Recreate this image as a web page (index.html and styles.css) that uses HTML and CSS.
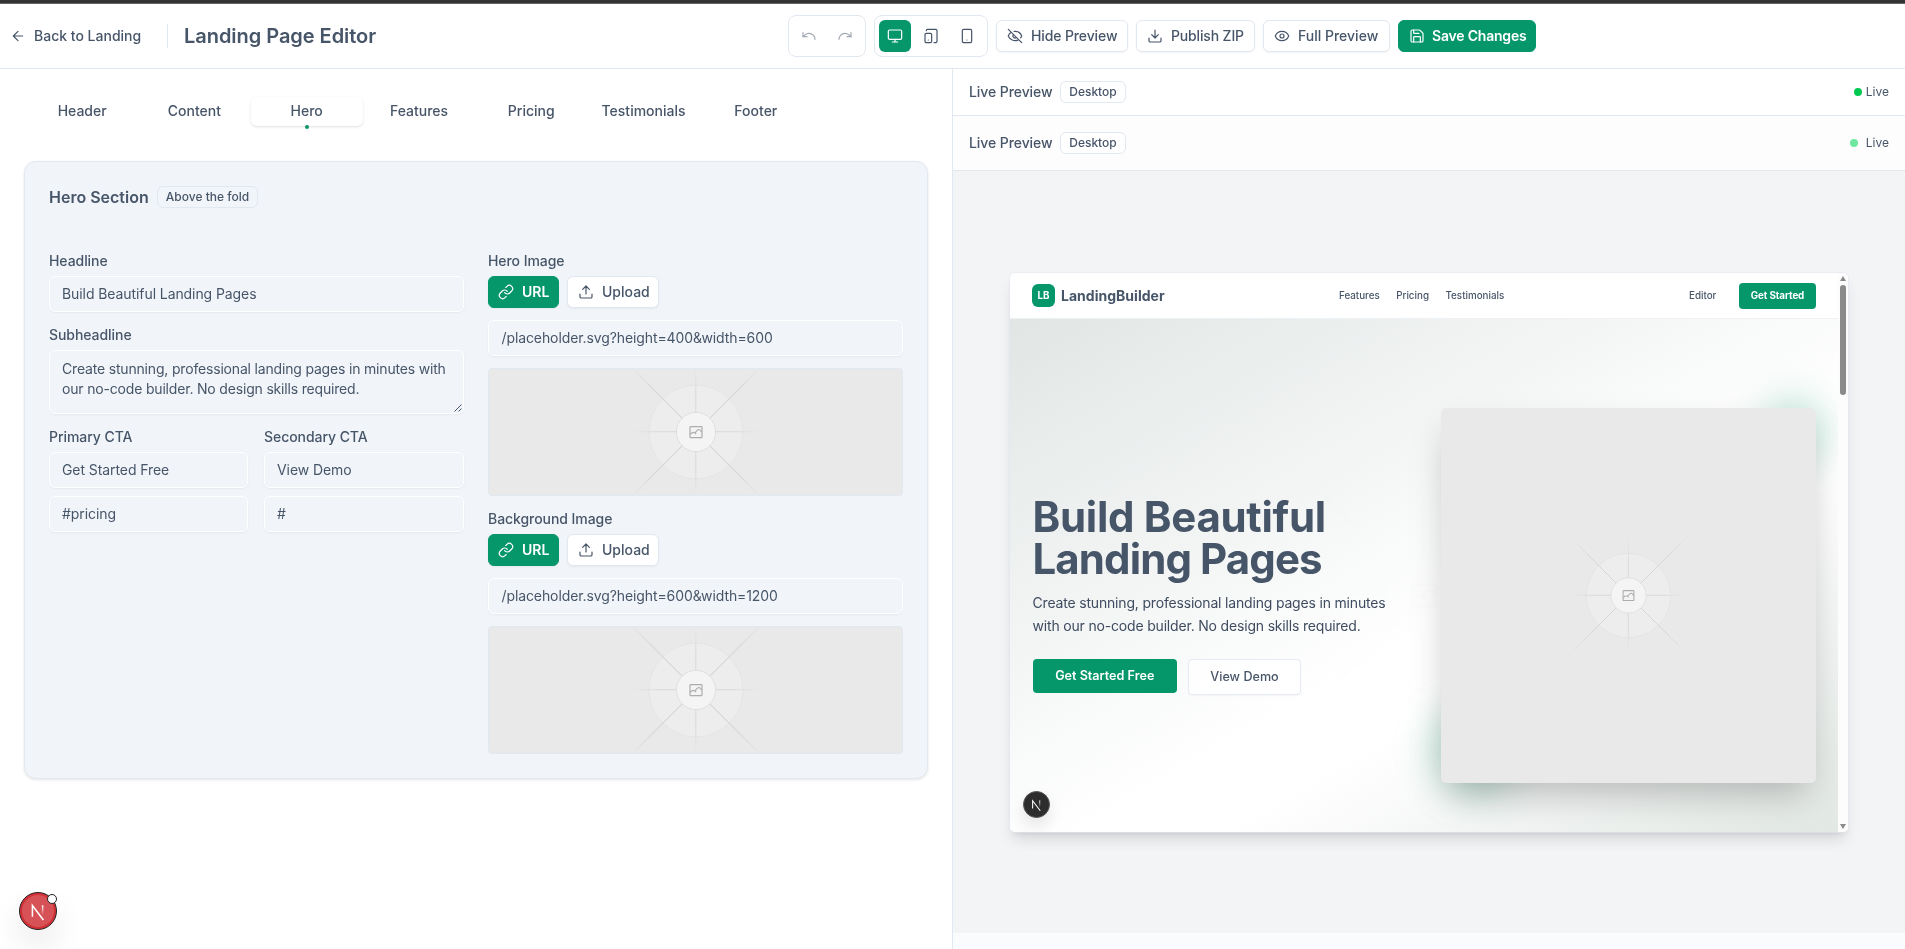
FILE: index.html
```html
<!DOCTYPE html>
<html lang="en">
<head>
<meta charset="utf-8">
<title>Landing Page Editor</title>
<link rel="stylesheet" href="styles.css">
</head>
<body>
<svg class="defs" width="0" height="0">
  <defs>
    <linearGradient id="fade-h" gradientUnits="userSpaceOnUse" x1="-64" y1="0" x2="64" y2="0"><stop offset="0" stop-color="#d8d8d8" stop-opacity="0"/><stop offset=".2" stop-color="#d8d8d8"/><stop offset=".8" stop-color="#d8d8d8"/><stop offset="1" stop-color="#d8d8d8" stop-opacity="0"/></linearGradient>
    <linearGradient id="fade-v" gradientUnits="userSpaceOnUse" x1="0" y1="-64" x2="0" y2="64"><stop offset="0" stop-color="#d8d8d8" stop-opacity="0"/><stop offset=".2" stop-color="#d8d8d8"/><stop offset=".8" stop-color="#d8d8d8"/><stop offset="1" stop-color="#d8d8d8" stop-opacity="0"/></linearGradient>
    <linearGradient id="fade-d" gradientUnits="userSpaceOnUse" x1="-66" y1="-66" x2="66" y2="66"><stop offset="0" stop-color="#d6d6d6" stop-opacity="0"/><stop offset=".17" stop-color="#d6d6d6"/><stop offset=".83" stop-color="#d6d6d6"/><stop offset="1" stop-color="#d6d6d6" stop-opacity="0"/></linearGradient>
    <linearGradient id="fade-u" gradientUnits="userSpaceOnUse" x1="-66" y1="66" x2="66" y2="-66"><stop offset="0" stop-color="#d6d6d6" stop-opacity="0"/><stop offset=".17" stop-color="#d6d6d6"/><stop offset=".83" stop-color="#d6d6d6"/><stop offset="1" stop-color="#d6d6d6" stop-opacity="0"/></linearGradient>
    <linearGradient id="n-fade" x1="0" y1="0" x2="0" y2="1"><stop offset="0" stop-color="#fff"/><stop offset="1" stop-color="#fff" stop-opacity="0"/></linearGradient>
    <symbol id="placeholder" viewBox="-64 -64 128 128">
      <circle r="47" fill="#ededed" stroke="#e3e3e3" stroke-width=".9"/>
      <path d="M-64 -.7H64V.3H-64Z" fill="url(#fade-h)"/>
      <path d="M-.7-64H.3V64H-.7Z" fill="url(#fade-v)"/>
      <path d="M-64-64 64 64" stroke="url(#fade-d)" stroke-width="1.1"/>
      <path d="M-64 64 64-64" stroke="url(#fade-u)" stroke-width="1.1"/>
      <circle r="19.6" fill="#f4f4f4" stroke="#dedede" stroke-width=".9"/>
      <g fill="none" stroke="#adadad" stroke-width="1.2" stroke-linejoin="round">
        <rect x="-6" y="-5.4" width="12" height="11" rx=".7"/>
        <path d="M-6 2.6-4.2.9Q-2.8-.1-1.4.7L.2 1.9M-1.2.8C.7-.2.6-2.4 3-2.5 4.6-2.3 5-.6 6 .1"/>
      </g>
    </symbol>
    <symbol id="n-mark" viewBox="0 0 40 40">
      <path d="M13.8 26.5V14L26 30" fill="none" stroke="#fff" stroke-width="1.7"/>
      <path d="M24.3 13.6H26v11h-1.7z" fill="url(#n-fade)"/>
    </symbol>
    <symbol id="link" viewBox="0 0 24 24"><path d="M10 13a5 5 0 0 0 7.54.54l3-3a5 5 0 0 0-7.07-7.07l-1.72 1.71"/><path d="M14 11a5 5 0 0 0-7.54-.54l-3 3a5 5 0 0 0 7.07 7.07l1.71-1.71"/></symbol>
    <symbol id="upload" viewBox="0 0 24 24"><path d="M12 3v12M17 8l-5-5-5 5M21 15v4a2 2 0 0 1-2 2H5a2 2 0 0 1-2-2v-4"/></symbol>
  </defs>
</svg>

<div class="topstrip"></div>
<header class="header">
  <a class="back"><svg class="icon" viewBox="0 0 24 24"><path d="m12 19-7-7 7-7M19 12H5"/></svg><span>Back to Landing</span></a>
  <i class="divider"></i>
  <h1 class="title">Landing Page Editor</h1>
  <div class="toolbar">
    <div class="group history">
      <button class="tool"><svg class="icon" viewBox="0 0 24 24"><path d="M3 7v6h6"/><path d="M21 17a9 9 0 0 0-9-9 9 9 0 0 0-6 2.3L3 13"/></svg></button>
      <button class="tool"><svg class="icon" viewBox="0 0 24 24"><path d="M21 7v6h-6"/><path d="M3 17a9 9 0 0 1 9-9 9 9 0 0 1 6 2.3l3 2.7"/></svg></button>
    </div>
    <div class="group">
      <button class="tool active"><svg class="icon" viewBox="0 0 24 24"><rect width="20" height="14" x="2" y="3" rx="2"/><path d="M8 21h8M12 17v4"/></svg></button>
      <button class="tool"><svg class="icon" viewBox="0 0 24 24"><rect width="10" height="14" x="3" y="8" rx="2"/><path d="M5 4a2 2 0 0 1 2-2h12a2 2 0 0 1 2 2v16a2 2 0 0 1-2 2h-2.4M8 18h.01"/></svg></button>
      <button class="tool"><svg class="icon" viewBox="0 0 24 24"><rect width="14" height="20" x="5" y="2" rx="2"/><path d="M12 18h.01"/></svg></button>
    </div>
    <button class="btn hide"><svg class="icon" viewBox="0 0 24 24"><path d="M10.733 5.076a10.744 10.744 0 0 1 11.205 6.575 1 1 0 0 1 0 .696 10.747 10.747 0 0 1-1.444 2.49M14.084 14.158a3 3 0 0 1-4.242-4.242M17.479 17.499a10.75 10.75 0 0 1-15.417-5.151 1 1 0 0 1 0-.696 10.75 10.75 0 0 1 4.446-5.143M2 2l20 20"/></svg><span>Hide Preview</span></button>
    <button class="btn publish"><svg class="icon" viewBox="0 0 24 24"><path d="M21 15v4a2 2 0 0 1-2 2H5a2 2 0 0 1-2-2v-4M7 10l5 5 5-5M12 15V3"/></svg><span>Publish ZIP</span></button>
    <button class="btn full"><svg class="icon" viewBox="0 0 24 24"><path d="M2.062 12.348a1 1 0 0 1 0-.696 10.75 10.75 0 0 1 19.876 0 1 1 0 0 1 0 .696 10.75 10.75 0 0 1-19.876 0"/><circle cx="12" cy="12" r="3"/></svg><span>Full Preview</span></button>
    <button class="btn primary save"><svg class="icon" viewBox="0 0 24 24"><path d="M15.2 3a2 2 0 0 1 1.4.6l3.8 3.8a2 2 0 0 1 .6 1.4V19a2 2 0 0 1-2 2H5a2 2 0 0 1-2-2V5a2 2 0 0 1 2-2z"/><path d="M17 21v-7a1 1 0 0 0-1-1H8a1 1 0 0 0-1 1v7M7 3v4a1 1 0 0 0 1 1h7"/></svg><span>Save Changes</span></button>
  </div>
</header>

<main class="workspace">
  <section class="editor">
    <nav class="tabs">
      <a class="tab">Header</a><a class="tab">Content</a><a class="tab current">Hero</a><a class="tab">Features</a><a class="tab">Pricing</a><a class="tab">Testimonials</a><a class="tab">Footer</a>
    </nav>
    <div class="card">
      <div class="card-head"><h2 class="card-title">Hero Section</h2><span class="badge fold">Above the fold</span></div>
      <div class="form">
        <div class="col">
          <div class="field"><label class="label">Headline</label><div class="input">Build Beautiful Landing Pages</div></div>
          <div class="field"><label class="label">Subheadline</label><div class="input area">Create stunning, professional landing pages in minutes with<br>our no-code builder. No design skills required.<svg class="grip" viewBox="0 0 8 8"><path d="M.5 7.5l7-7M4.5 7.5l3-3"/></svg></div></div>
          <div class="pair">
            <div class="field"><label class="label">Primary CTA</label><div class="input">Get Started Free</div><div class="input">#pricing</div></div>
            <div class="field"><label class="label">Secondary CTA</label><div class="input">View Demo</div><div class="input">#</div></div>
          </div>
        </div>
        <div class="col">
          <div class="field media"><label class="label">Hero Image</label>
            <div class="row"><button class="btn primary url"><svg class="icon"><use href="#link"/></svg><span>URL</span></button><button class="btn up"><svg class="icon"><use href="#upload"/></svg><span>Upload</span></button></div>
            <div class="input path">/placeholder.svg?height=400&amp;width=600</div>
            <div class="thumb"><svg class="ph"><use href="#placeholder"/></svg></div>
          </div>
          <div class="field media"><label class="label">Background Image</label>
            <div class="row"><button class="btn primary url"><svg class="icon"><use href="#link"/></svg><span>URL</span></button><button class="btn up"><svg class="icon"><use href="#upload"/></svg><span>Upload</span></button></div>
            <div class="input path">/placeholder.svg?height=600&amp;width=1200</div>
            <div class="thumb"><svg class="ph"><use href="#placeholder"/></svg></div>
          </div>
        </div>
      </div>
    </div>
  </section>

  <section class="preview">
    <div class="bar"><span class="bar-title">Live Preview</span><span class="badge desk">Desktop</span><span class="live"><i class="dot"></i>Live</span></div>
    <div class="bar second"><span class="bar-title">Live Preview</span><span class="badge desk">Desktop</span><span class="live"><i class="dot"></i>Live</span></div>
    <div class="stage">
      <div class="frame">
        <div class="site">
          <div class="site-nav">
            <span class="logo">LB</span><b class="brand">LandingBuilder</b>
            <div class="links"><span>Features</span><span>Pricing</span><span>Testimonials</span></div>
            <span class="edit">Editor</span><span class="start">Get Started</span>
          </div>
          <div class="hero">
            <svg class="hero-bg"><use href="#placeholder"/></svg>
            <div class="copy">
              <h3 class="headline"><span class="line-one">Build Beautiful</span><span class="line-two">Landing Pages</span></h3>
              <p class="lead">Create stunning, professional landing pages in minutes<br>with our no-code builder. No design skills required.</p>
              <div class="ctas"><span class="cta solid">Get Started Free</span><span class="cta ghost">View Demo</span></div>
            </div>
            <div class="shot"><i class="glow tr"></i><i class="glow bl"></i><div class="shot-img"><svg class="ph"><use href="#placeholder"/></svg></div></div>
            <div class="dev small"><svg class="n"><use href="#n-mark"/></svg></div>
          </div>
        </div>
        <div class="scrollbar"><i class="arrow-up"></i><i class="thumb-bar"></i><i class="arrow-down"></i></div>
      </div>
    </div>
  </section>
</main>
<div class="dev big"><svg class="n"><use href="#n-mark"/></svg><i class="notch"></i></div>
</body>
</html>
```
FILE: styles.css
```css
* { box-sizing: border-box; }
body { margin: 0; height: 949px; overflow: hidden; background: #fff; color: #475569; font: 400 14px/20px Inter, "Liberation Sans", sans-serif; display: flex; flex-direction: column; }
h1, h2, h3, p { margin: 0; }
button { font: inherit; color: inherit; border: 0; background: none; padding: 0; }
.defs { position: absolute; }
.icon { width: 16px; height: 16px; flex: none; fill: none; stroke: currentColor; stroke-width: 1.8; stroke-linecap: round; stroke-linejoin: round; }

.topstrip { height: 4px; flex: none; background: #333; border-bottom: 1px solid #666; }
.header { height: 65px; flex: none; display: flex; align-items: center; border-bottom: 1px solid #e2e8f0; padding-left: 10px; }
.back { display: flex; align-items: center; gap: 8px; width: 157px; font-weight: 450; white-space: nowrap; letter-spacing: 0; }
.divider { width: 1px; height: 24px; background: #e2e8f0; }
.title { margin-left: 16px; width: 604px; font-size: 20px; line-height: 28px; font-weight: 570; letter-spacing: -.04px; white-space: nowrap; }
.toolbar { display: flex; align-items: center; gap: 8px; }
.group { display: flex; gap: 4px; padding: 4px; border: 1px solid #e2e8f0; border-radius: 8px; }
.tool { width: 32px; height: 32px; display: flex; align-items: center; justify-content: center; border-radius: 6px; }
.history .tool { opacity: .5; }
.tool.active, .btn.primary { background: #059669; color: #fff; border-color: #059669; }
.btn { height: 32px; display: flex; align-items: center; gap: 8px; padding: 0 10px; border: 1px solid #e2e8f0; border-radius: 6px; background: #fff; font-weight: 450; white-space: nowrap; box-shadow: 0 1px 2px rgba(0,0,0,.05); }
.hide { width: 132px; letter-spacing: -.12px; }
.publish { width: 119px; letter-spacing: -.15px; }
.full { width: 127px; letter-spacing: 0; }
.btn.save { width: 138px; padding-left: 10px; gap: 7px; font-weight: 600; letter-spacing: -.2px; box-shadow: none; }

.workspace { flex: 1; display: flex; min-height: 0; }
.editor { width: 952px; flex: none; padding: 24px 24px 0; }
.tabs { display: flex; width: 790px; height: 36px; padding: 4px 2px 3px 2px; }
.tab { flex: 1; height: 29px; line-height: 28px; text-align: center; font-weight: 450; letter-spacing: 0; border-radius: 6px; position: relative; }
.current { box-shadow: 0 1px 3px rgba(0,0,0,.1), 0 1px 2px -1px rgba(0,0,0,.1); }
.current::after { content: ""; position: absolute; left: calc(50% - 2px); bottom: -3px; width: 4px; height: 4px; border-radius: 50%; background: #059669; }
.card { margin-top: 32px; height: 618px; padding: 24px; border: 1px solid #e2e8f0; border-radius: 12px; background: #f1f5f9; box-shadow: 0 1px 3px rgba(0,0,0,.1); width: 904px; }
.card-head { display: flex; align-items: center; gap: 8px; height: 22px; }
.card-title { width: 100px; font-size: 16px; line-height: 22px; margin-top: -1px; font-weight: 560; letter-spacing: 0; white-space: nowrap; }
.badge { height: 22px; display: flex; align-items: center; justify-content: center; border: 1px solid #e2e8f0; border-radius: 6px; font-size: 12px; line-height: 16px; font-weight: 450; white-space: nowrap; }
.fold { width: 101px; letter-spacing: 0; }
.form { display: grid; grid-template-columns: 415px 415px; gap: 24px; margin-top: 43px; }
.col { display: flex; flex-direction: column; gap: 13px; }
.field { display: flex; flex-direction: column; gap: 8px; }
.label { height: 17px; line-height: 20px; font-weight: 450; letter-spacing: -.06px; }
.input { height: 36px; padding: 7px 12px; border: 1px solid #fff; border-radius: 6px; box-shadow: 0 1px 2px rgba(0,0,0,.05); white-space: nowrap; position: relative; letter-spacing: -.08px; }
.area { height: 64px; padding-top: 8px; letter-spacing: -.18px; }
.grip { position: absolute; right: 1px; bottom: 1px; width: 8px; height: 8px; stroke: #475569; stroke-width: 1; fill: none; }
.pair { display: grid; grid-template-columns: 199px 200px; gap: 16px; }
.row { display: flex; gap: 8px; }
.btn.url { width: 71px; padding-left: 9px; font-weight: 600; }
.up { width: 92px; }
.media .row, .media .path { margin-bottom: 4px; }
.path { padding-left: 12.5px; letter-spacing: -.1px; }
.thumb { height: 128px; border: 1px solid #e2e8f0; border-radius: 4px; background: #e9e9e9; display: flex; align-items: center; justify-content: center; overflow: hidden; }
.ph { width: 128px; height: 128px; flex: none; }

.preview { flex: 1; border-left: 1px solid #e2e8f0; background: #f9fbfd; }
.bar { height: 47px; display: flex; align-items: center; padding: 0 16px; border-bottom: 1px solid #e2e8f0; background: #fff; }
.bar-title { width: 91px; font-weight: 450; letter-spacing: -.08px; white-space: nowrap; }
.desk { width: 66px; background: #fff; }
.live { margin-left: auto; display: flex; align-items: center; gap: 4px; font-size: 12px; }
.dot { width: 8px; height: 8px; border-radius: 50%; background: #00c951; }
.second { height: 55px; background: #fdfdfd; }
.second .live { gap: 8px; }
.second .dot { background: #6ee7a0; }
.stage { height: 762px; background: #f3f4f6; padding: 102px 57px; }
.frame { width: 838px; height: 559px; display: flex; border-radius: 5px; background: #fff; overflow: hidden; box-shadow: 0 0 0 1px rgba(226,232,240,.6), 0 10px 15px -3px rgba(0,0,0,.12), 0 4px 6px -4px rgba(0,0,0,.14); }
.site { width: 828px; display: flex; flex-direction: column; }
.site-nav { height: 46px; border-bottom: 1px solid #eef1f5; display: flex; align-items: center; padding: 0 22px; font-size: 9.8px; line-height: 14px; font-weight: 450; white-space: nowrap; }
.logo { width: 23px; height: 23px; margin-right: 6px; border-radius: 6px; background: #059669; color: #fff; font-weight: 700; display: flex; align-items: center; justify-content: center; }
.brand { width: 278px; font-size: 14px; font-weight: 650; letter-spacing: .02px; }
.links { display: flex; gap: 16.5px; width: 350px; }
.edit { width: 50px; }
.start { width: 77px; height: 26px; border-radius: 4px; background: #059669; color: #fff; font-weight: 700; display: flex; align-items: center; justify-content: center; letter-spacing: -.1px; }
.hero { height: 513px; position: relative; overflow: hidden; display: flex; padding: 89px 22px 0; background: linear-gradient(150deg, #e1e6e5 0%, #fff 56%, #fff 64%, #e2e8e4 100%); }
.hero-bg { position: absolute; left: 286px; top: 148px; width: 256px; height: 256px; opacity: .035; mix-blend-mode: multiply; }
.copy { width: 409px; padding: 88px 0 0 .5px; position: relative; }
.headline { display: flex; flex-direction: column; font-size: 42px; line-height: 42px; font-weight: 700; white-space: nowrap; }
.line-one { letter-spacing: -.3px; }
.line-two { letter-spacing: -.9px; }
.lead { margin-top: 11px; font-size: 14px; line-height: 23px; letter-spacing: -.18px; color: #3f4c60; white-space: nowrap; }
.ctas { display: flex; gap: 11px; margin-top: 22px; }
.cta { display: flex; align-items: center; justify-content: center; border-radius: 4px; font-size: 12.6px; font-weight: 450; white-space: nowrap; }
.solid { width: 144.5px; height: 34px; background: #059669; color: #fff; font-weight: 600; }
.ghost { width: 113px; height: 36px; background: rgba(255,255,255,.8); border: 1px solid #e6eaf2; box-shadow: 0 1px 2px rgba(0,0,0,.04); }
.shot { width: 375px; height: 375px; position: relative; }
.shot-img { position: relative; height: 100%; border-radius: 5px; background: #e9e9e9; display: flex; align-items: center; justify-content: center; box-shadow: 0 18px 35px -8px rgba(0,0,0,.25); }
.shot-img .ph { width: 115px; height: 115px; }
.glow { position: absolute; border-radius: 50%; filter: blur(18px); background: rgba(5,150,105,.22); }
.tr { width: 67px; height: 67px; top: -11px; right: -11px; }
.bl { width: 90px; height: 90px; bottom: -11px; left: -11px; }
.scrollbar { width: 10px; background: #fcfcfc; display: flex; flex-direction: column; align-items: center; padding: 3px 0; }
.arrow-up { border: 3px solid transparent; border-top: 0; border-bottom: 5px solid #8a8a8a; }
.thumb-bar { margin-top: 4px; width: 6px; height: 110px; border-radius: 3px; background: #8a8a8a; }
.arrow-down { margin-top: auto; border: 3px solid transparent; border-bottom: 0; border-top: 5px solid #8a8a8a; }

.dev { position: absolute; border-radius: 50%; }
.small { left: 13px; bottom: 14px; width: 27px; height: 27px; background: #2d2d2d; border: 1px solid #555; box-shadow: 0 8px 16px rgba(0,0,0,.1); }
.big { left: 19px; top: 892px; width: 38px; height: 38px; background: #d65257; border: 1px solid #222; box-shadow: inset 0 0 0 2px #d12f35, 0 16px 32px rgba(0,0,0,.09); }
.n { display: block; width: 100%; height: 100%; }
.notch { position: absolute; left: 27px; top: 1px; width: 10px; height: 10px; border: 1px solid #222; border-radius: 50%; background: #fff; }
```
